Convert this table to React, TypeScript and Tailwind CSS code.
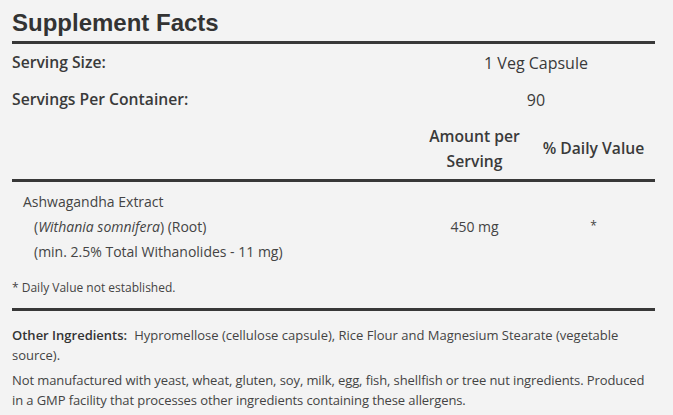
const font = { fontFamily: "'Open Sans', Lato, sans-serif" }

const Rule = () => <div className="h-[3px] bg-[#383838]" />

const App = () => {
  return (
    <div className="min-h-[415px] w-[673px] bg-[#f3f3f3] text-[#3a3a3a]" style={font}>
      <div className="ml-3 w-[643px] pt-[9px]">
        <h1 className="text-[24px] font-bold leading-[28px] text-[#333]" style={{ fontFamily: "'Liberation Sans', Arial, sans-serif" }}>
          Supplement Facts
        </h1>
        <div className="mt-[4px]">
          <Rule />
        </div>

        {/* Serving info */}
        <div className="flex h-[37px] items-center text-[15.7px] font-semibold">
          <span className="w-[405px]">Serving Size:</span>
          <span className="flex-1 text-center text-[16px] font-normal">1 Veg Capsule</span>
        </div>
        <div className="flex h-[37px] items-center text-[15.7px] font-semibold">
          <span className="w-[405px]">Servings Per Container:</span>
          <span className="flex-1 text-center text-[16px] font-normal">90</span>
        </div>

        {/* Column headers */}
        <div className="flex h-[61px] items-center text-[15.7px] font-semibold">
          <span className="w-[405px]"></span>
          <span className="w-[115px] text-center leading-[25px]">
            Amount per
            <br />
            Serving
          </span>
          <span className="flex-1 text-center">% Daily Value</span>
        </div>
        <Rule />

        {/* Ingredient */}
        <div className="flex pt-[7px] text-[14px] leading-[25px] text-[#444]">
          <div className="w-[405px] pl-[11px]">
            <div>Ashwagandha Extract</div>
            <div className="pl-[11px]">
              (<i>Withania somnifera</i>) (Root)
            </div>
            <div className="pl-[11px]">(min. 2.5% Total Withanolides - 11 mg)</div>
          </div>
          <div className="w-[115px] pt-[25px] text-center">450 mg</div>
          <div className="flex-1 pt-[24px] text-center text-[12px]">*</div>
        </div>

        <div className="pt-[15px] pb-[11px] text-[12px] leading-[18px] text-[#444]">
          * Daily Value not established.
        </div>
        <Rule />

        {/* Other ingredients */}
        <div className="pt-[14px] text-[13px] leading-[20px] text-[#444]">
          <div className="flex gap-[7px]">
            <span className="font-semibold text-[#333]">Other Ingredients:</span>
            <span>Hypromellose (cellulose capsule), Rice Flour and Magnesium Stearate (vegetable</span>
          </div>
          <div>source).</div>
          <p className="mt-[5px] tracking-[-0.1px]">
            Not manufactured with yeast, wheat, gluten, soy, milk, egg, fish, shellfish or tree nut ingredients. Produced
            <br />
            in a GMP facility that processes other ingredients containing these allergens.
          </p>
        </div>
      </div>
    </div>
  )
}

export default App
